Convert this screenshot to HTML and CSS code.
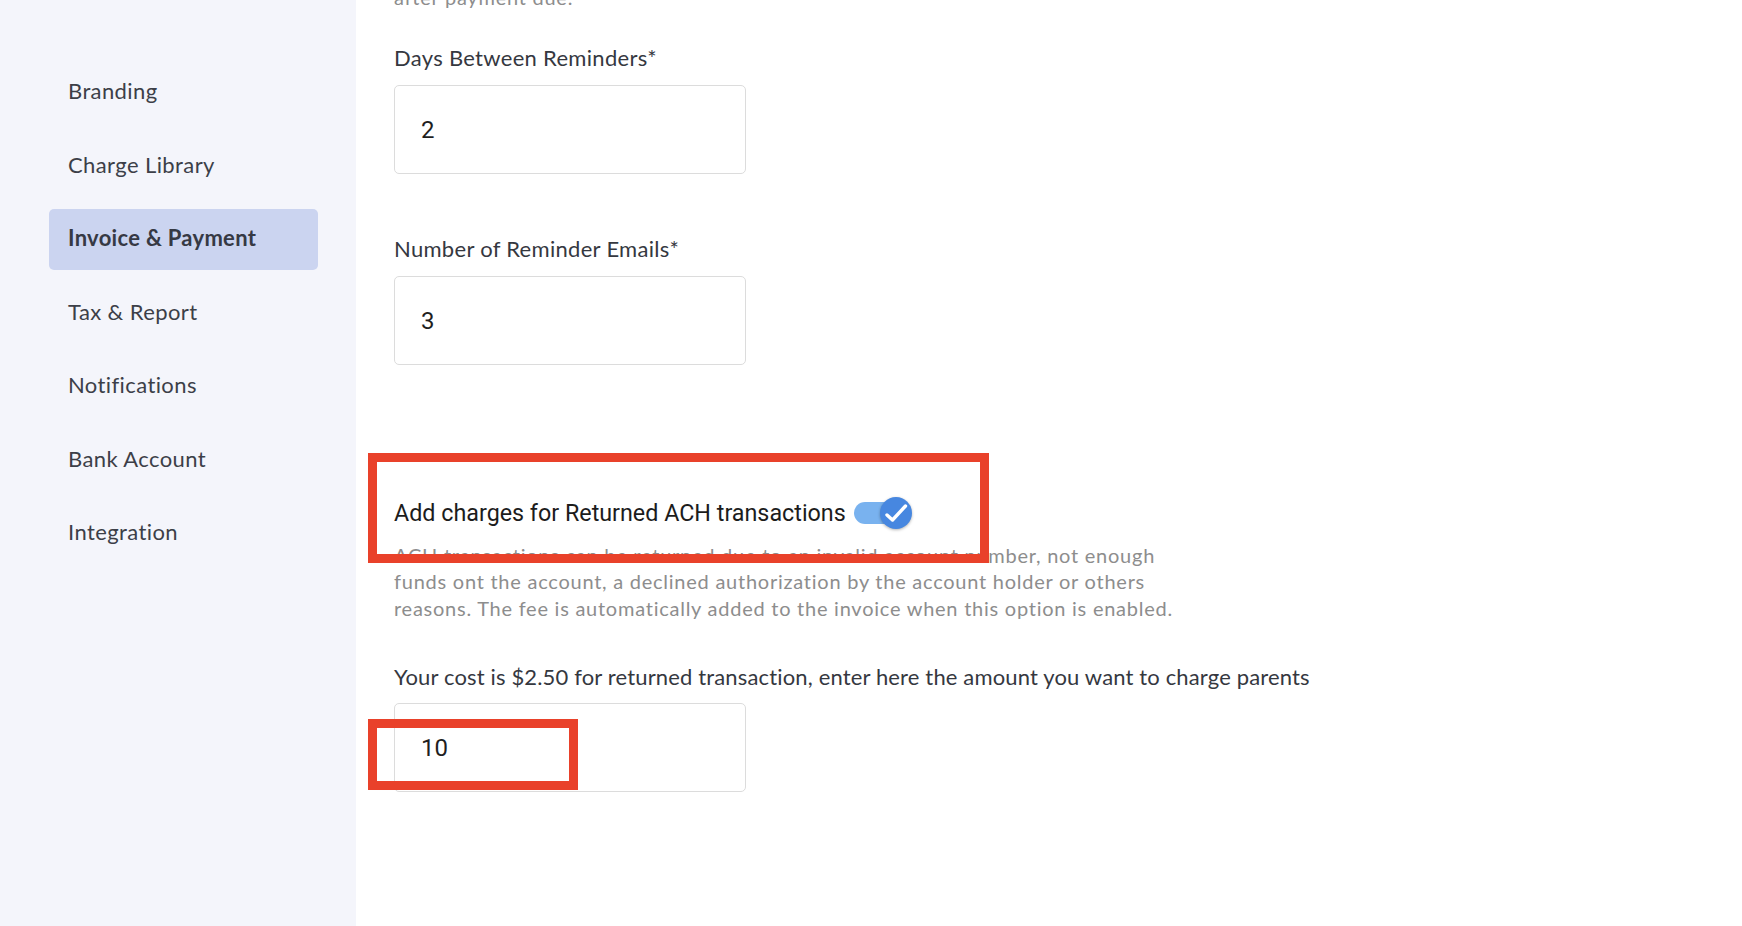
FILE: index.html
```html
<!DOCTYPE html>
<html lang="en">
<head>
<meta charset="utf-8">
<title>Invoice &amp; Payment</title>
<link rel="stylesheet" href="styles.css">
</head>
<body>
<div class="app">
  <aside class="sidebar">
    <nav class="nav">
      <a class="nav-item">Branding</a>
      <a class="nav-item">Charge Library</a>
      <a class="nav-item active">Invoice &amp; Payment</a>
      <a class="nav-item">Tax &amp; Report</a>
      <a class="nav-item">Notifications</a>
      <a class="nav-item">Bank Account</a>
      <a class="nav-item">Integration</a>
    </nav>
  </aside>
  <main class="main">
    <div class="content">
      <p class="help help-top">after payment due.</p>

      <div class="field">
        <label class="field-label">Days Between Reminders*</label>
        <div class="input">2</div>
      </div>

      <div class="field">
        <label class="field-label">Number of Reminder Emails*</label>
        <div class="input">3</div>
      </div>

      <div class="toggle-row">
        <span class="toggle-label">Add charges for Returned ACH transactions</span>
        <span class="switch">
          <span class="track"></span>
          <span class="knob">
            <svg viewBox="0 0 32 32" width="32" height="32"><polyline points="7,18 12.5,23 25.5,9" fill="none" stroke="#fff" stroke-width="3.4" stroke-linecap="round" stroke-linejoin="round"/></svg>
          </span>
        </span>
      </div>
      <p class="help desc">ACH transactions can be returned due to an invalid account number, not enough<br>funds ont the account, a declined authorization by the account holder or others<br>reasons. The fee is automatically added to the invoice when this option is enabled.</p>

      <div class="field field-cost">
        <label class="field-label">Your cost is $2.50 for returned transaction, enter here the amount you want to charge parents</label>
        <div class="input">10</div>
      </div>
    </div>
  </main>
  <div class="annot annot-1"></div>
  <div class="annot annot-2"></div>
</div>
</body>
</html>
```

FILE: styles.css
```css
* { box-sizing: border-box; }
html, body { margin: 0; padding: 0; height: 100%; overflow: hidden; background: #fff; }
body { font-family: "Lato", "Open Sans", sans-serif; color: #3a3d45; }

.app { position: relative; display: flex; height: 926px; }

.sidebar { width: 356px; flex: none; background: #f4f5fb; }
.nav { display: flex; flex-direction: column; gap: 12.5px; padding: 62px 0 0 49px; }
.nav-item {
  width: 269px; height: 61px; display: flex; align-items: center;
  padding: 0 0 4px 19px; font-size: 22px; letter-spacing: 0.4px; color: #3c3f48;
  border-radius: 5px; cursor: pointer;
}
.nav-item.active { background: #cbd4f0; font-weight: 700; color: #363944; letter-spacing: 0.3px; }

.main { flex: 1; padding-left: 38px; }
.content { margin-top: -16px; display: flex; flex-direction: column; }

.help { margin: 0; font-size: 20px; line-height: 26.4px; color: #8d8d8d; letter-spacing: 0.75px; }
.help-top { line-height: 26px; }

.field { display: flex; flex-direction: column; }
.field-label { font-size: 22px; line-height: 24px; color: #35383f; letter-spacing: 0.3px; margin-bottom: 15px; }
.input {
  width: 352px; height: 89px; border: 1px solid #dcdcdc; border-radius: 5px;
  display: flex; align-items: center; padding-left: 26px;
  font-family: "Roboto", "Liberation Sans", sans-serif; font-size: 24px; color: #1f1f1f;
}
.help-top + .field { margin-top: 36px; }
.field + .field { margin-top: 63px; }

.toggle-row { display: flex; align-items: center; height: 32px; margin-top: 132px; }
.toggle-label { font-family: "Roboto", "Liberation Sans", sans-serif; font-size: 23.3px; color: #1c1c1c; }
.switch { position: relative; width: 58px; height: 32px; margin-left: 8px; display: inline-block; }
.track { position: absolute; left: 0; top: 5px; width: 48px; height: 22px; border-radius: 11px; background: #79b2ef; }
.knob {
  position: absolute; left: 26px; top: 0; width: 32px; height: 32px; border-radius: 50%;
  background: #4787e0; box-shadow: 0 1px 3px rgba(0,0,0,0.3);
  display: flex; align-items: center; justify-content: center;
}
.desc { margin-top: 13px; }

.field-cost { margin-top: 44px; }
.field-cost .field-label { margin-bottom: 14px; letter-spacing: 0.15px; }

.annot { position: absolute; border: 9px solid #e9412a; background: transparent; }
.annot-1 { left: 368px; top: 453px; width: 621px; height: 110px; }
.annot-2 { left: 368px; top: 719px; width: 210px; height: 71px; }
```
